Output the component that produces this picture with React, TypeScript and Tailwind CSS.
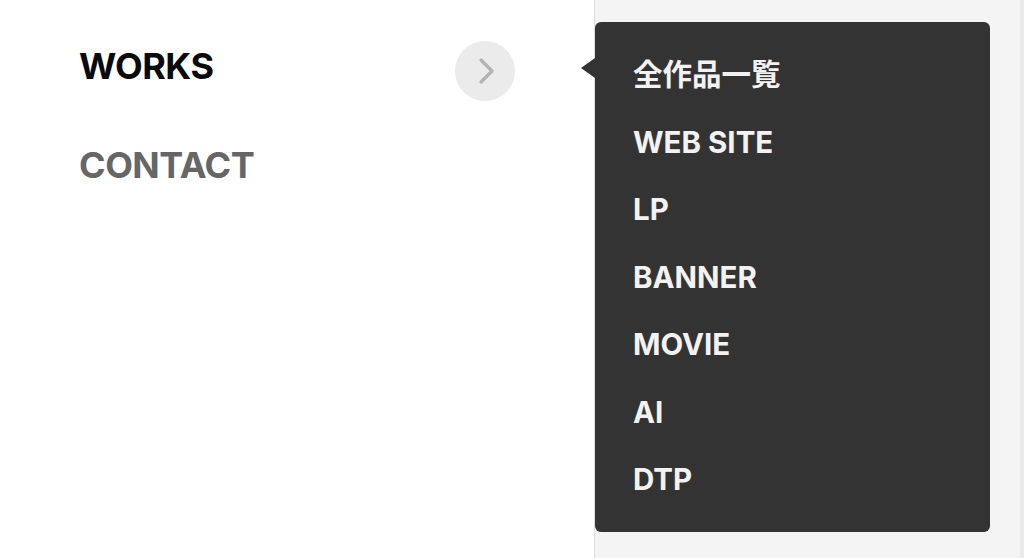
import React from "react";

const items = ["全作品一覧", "WEB SITE", "LP", "BANNER", "MOVIE", "AI", "DTP"];

export default function App() {
  return (
    <div
      className="flex w-[1024px] h-[558px] bg-white overflow-hidden"
      style={{ fontFamily: 'Inter, "Noto Sans CJK JP", sans-serif' }}
    >
      <div className="w-[594px] shrink-0 pl-[79px]">
        <div className="mt-[41px] flex h-[60px] w-[436px] items-center justify-between">
          <span className="mb-[10px] text-[36px] font-bold leading-none tracking-[-0.5px] text-[#0a0a0a]">
            WORKS
          </span>
          <div className="flex h-[60px] w-[60px] items-center justify-center rounded-full bg-[#ebebeb]">
            <svg width="24" height="28" viewBox="0 0 24 28" fill="none" className="ml-[1px]">
              <path d="M7 3 L18 14 L7 25" stroke="#b3b3b3" strokeWidth="3.2" strokeLinecap="round" strokeLinejoin="round" />
            </svg>
          </div>
        </div>
        <div className="mt-[44px] text-[36px] font-bold leading-[40px] tracking-[-0.5px] text-[#666666]">
          CONTACT
        </div>
      </div>
      <div className="flex-1 border-l border-[#dddddd] border-r-4 border-r-[#ebebeb] bg-[#f4f4f4]">
        <div className="relative mt-[22px] h-[510px] w-[395px] rounded-[6px] bg-[#333333] px-[38px] pt-[19px]">
          <div className="absolute left-[-14px] top-[36px] h-0 w-0 border-y-[10px] border-r-[14px] border-y-transparent border-r-[#333333]" />
          <ul className="flex flex-col">
            {items.map((t) => (
              <li
                key={t}
                className="text-[29.5px] font-bold leading-[67.5px] tracking-[0px] text-[#f2f2f2]"
              >
                {t}
              </li>
            ))}
          </ul>
        </div>
      </div>
    </div>
  );
}
